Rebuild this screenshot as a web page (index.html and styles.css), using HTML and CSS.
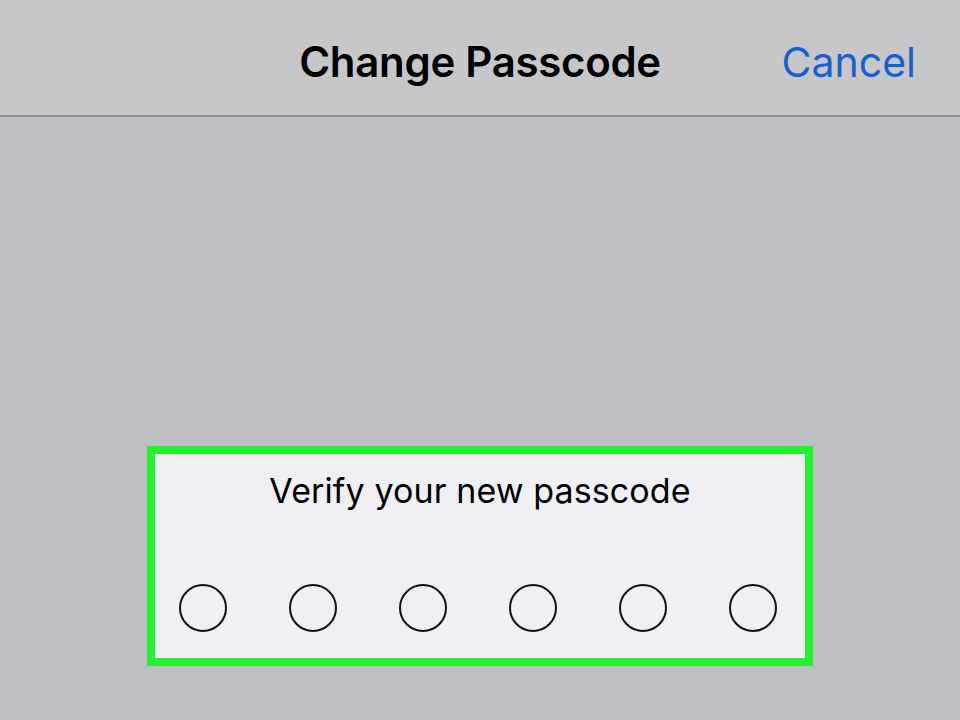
FILE: index.html
```html
<!DOCTYPE html>
<html lang="en">
<head>
  <meta charset="UTF-8">
  <title>Change Passcode</title>
  <link rel="stylesheet" href="styles.css">
</head>
<body>

<header class="barra">
  <div class="lado"></div>
  <h1>Change Passcode</h1>
  <div class="lado derecha"><a href="#" class="cancelar">Cancel</a></div>
</header>

<main class="contenido">
  <section class="caja">
    <p class="mensaje">Verify your new passcode</p>
    <div class="puntos">
      <span class="punto"></span>
      <span class="punto"></span>
      <span class="punto"></span>
      <span class="punto"></span>
      <span class="punto"></span>
      <span class="punto"></span>
    </div>
  </section>
</main>

</body>
</html>
```

FILE: styles.css
```css
html, body {
  margin: 0;
  height: 100%;
}

body {
  font-family: Inter, "Liberation Sans", sans-serif;
  background-color: #bfbec3;
  color: #000;
  display: flex;
  flex-direction: column;
}

.barra {
  height: 117px;
  background-color: #c7c7ca;
  border-bottom: 2px solid #8e8e92;
  display: flex;
  align-items: center;
  box-sizing: border-box;
  padding: 8px 44px 0 44px;
}

.barra .lado {
  flex: 1;
}

.barra .derecha {
  text-align: right;
}

.barra h1 {
  margin: 0;
  font-size: 42px;
  font-weight: 600;
  letter-spacing: -0.3px;
}

.cancelar {
  color: #1a5fd2;
  text-decoration: none;
  font-size: 41px;
  font-weight: 400;
  display: inline-block;
}

.contenido {
  flex: 1;
  display: flex;
  justify-content: center;
  padding-top: 329px;
}

.caja {
  width: 666px;
  height: 220px;
  box-sizing: border-box;
  border: 8px solid #22f030;
  background-color: #efeff4;
  display: flex;
  flex-direction: column;
  align-items: center;
}

.mensaje {
  margin: 16px 0 0;
  font-size: 34px;
  letter-spacing: 0.1px;
}

.puntos {
  display: flex;
  gap: 62px;
  margin-top: 73px;
  margin-right: 4px;
}

.punto {
  width: 44px;
  height: 44px;
  border: 2px solid #111;
  border-radius: 50%;
}
```
